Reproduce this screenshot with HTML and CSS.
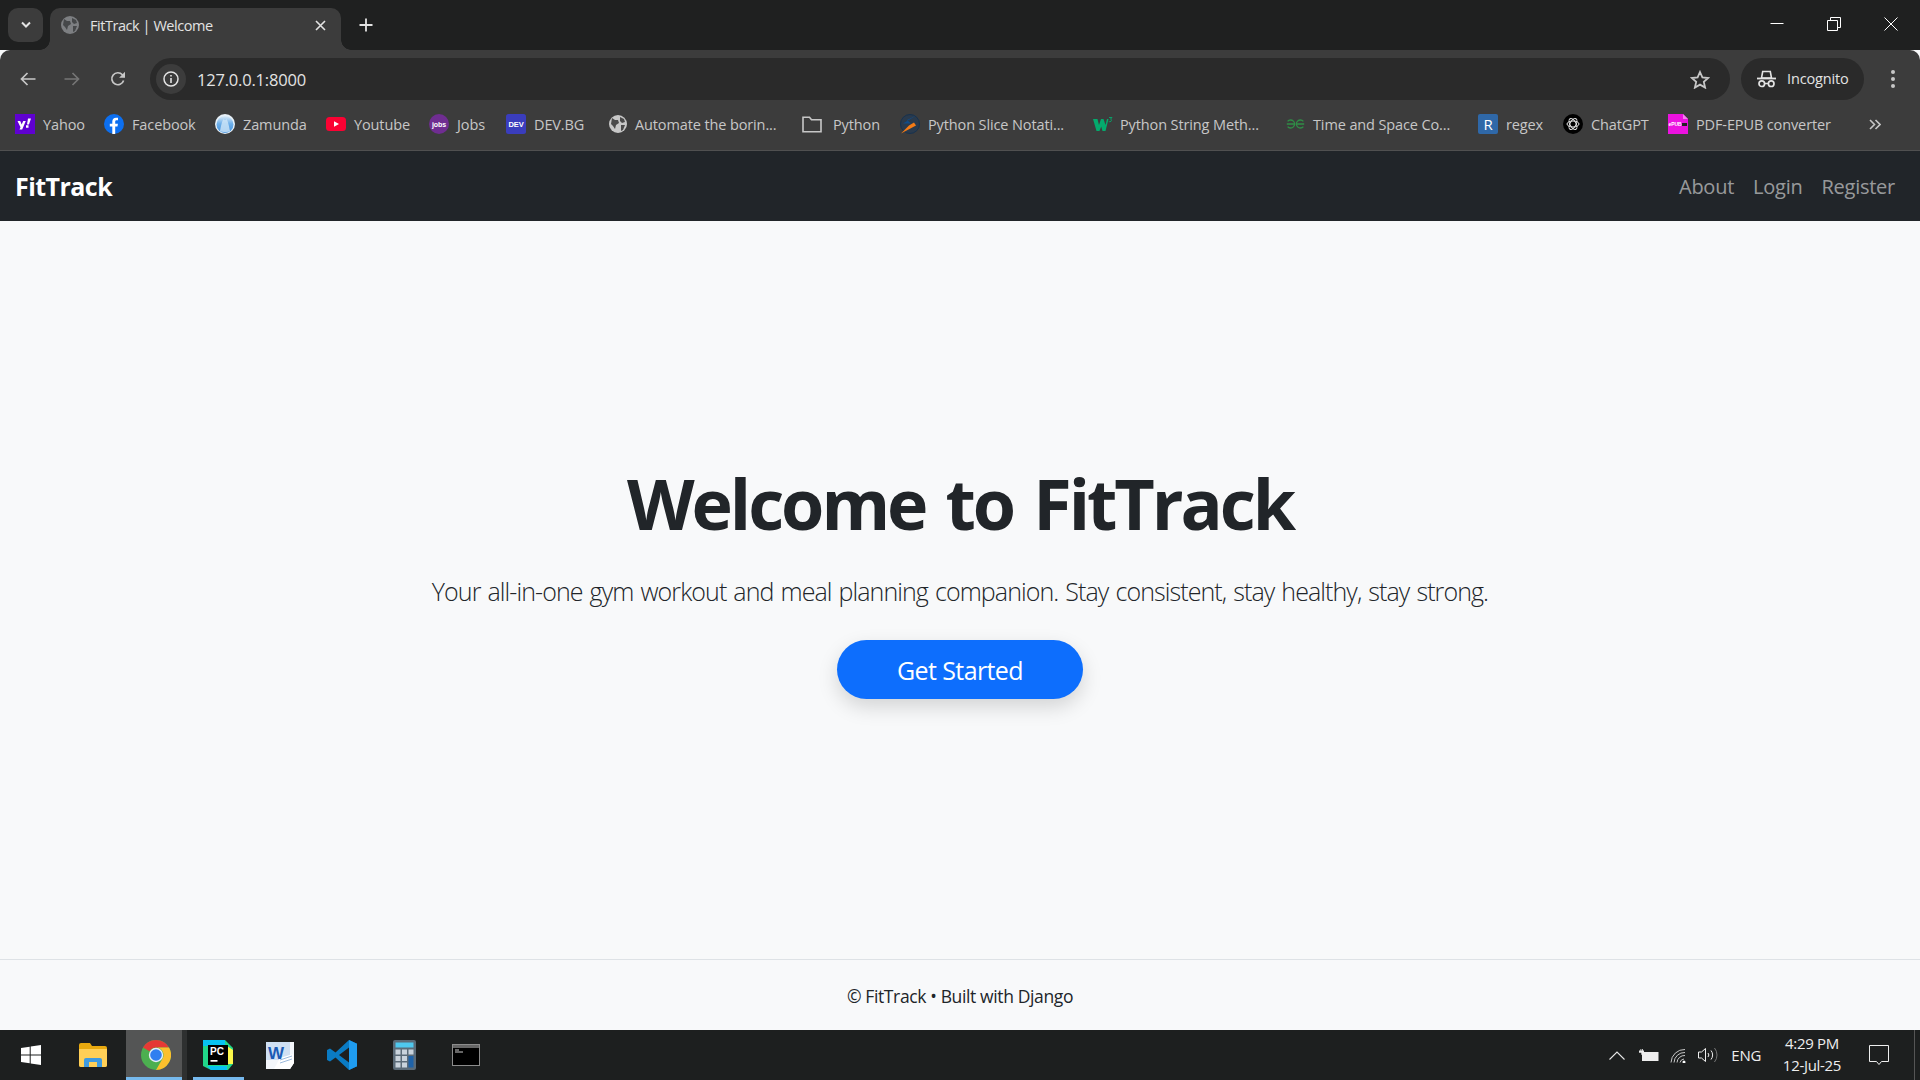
FILE: index.html
```html
<!DOCTYPE html>
<html lang="en">
<head>
<meta charset="utf-8">
<title>FitTrack | Welcome</title>
<link rel="stylesheet" href="styles.css">
</head>
<body>
<header class="browser">
  <div class="tabstrip">
    <button class="tablist"><svg width="12" height="8" viewBox="0 0 12 8"><path d="M2 1.500l4 4 4-4" fill="none" stroke="#e3e3e3" stroke-width="2"/></svg></button>
    <div class="tab">
      <svg class="fav" width="18" height="18" viewBox="0 0 18 18"><circle cx="9" cy="9" r="9" fill="#7d7f82"/><path d="M3 3l3 2 3 0 1 3-3 2-1 4-2-3-2-2zM11 2l4 2 1 3-3 1-2-2zM12 10l4 0-2 5-2 1z" fill="#46484a"/></svg>
      <span class="tabtitle">FitTrack | Welcome</span>
      <svg class="tabclose" width="11" height="11" viewBox="0 0 11 11"><path d="M1 1l9 9M10 1l-9 9" stroke="#e3e3e3" stroke-width="1.600"/></svg>
    </div>
    <svg class="newtab" width="14" height="14" viewBox="0 0 14 14"><path d="M7 0.500v13M0.500 7h13" stroke="#e3e3e3" stroke-width="1.800"/></svg>
    <div class="winctl">
      <svg width="14" height="14" viewBox="0 0 14 14"><path d="M0.500 6.500h13" stroke="#fff" stroke-width="1"/></svg>
      <svg width="14" height="14" viewBox="0 0 14 14"><path d="M0.500 3.500h10v10h-10zM3.500 3.500v-3h10v10h-3" fill="none" stroke="#fff" stroke-width="1"/></svg>
      <svg width="14" height="14" viewBox="0 0 14 14"><path d="M0.500 0.500l13 13M13.500 0.500l-13 13" stroke="#fff" stroke-width="1"/></svg>
    </div>
  </div>
  <div class="toolbar">
    <svg class="navicon" width="16" height="14" viewBox="0 0 16 14"><path d="M15.500 7H1.500M7.500 1L1.500 7l6 6" fill="none" stroke="#c7c7c7" stroke-width="1.700"/></svg>
    <svg class="navicon fwd" width="16" height="14" viewBox="0 0 16 14"><path d="M0.500 7h14M8.500 1l6 6-6 6" fill="none" stroke="#757575" stroke-width="1.700"/></svg>
    <svg class="navicon rel" width="16" height="16" viewBox="0 0 16 16"><path d="M13.600 9.500A6 6 0 1 1 12.400 3.800L14.500 6" fill="none" stroke="#c7c7c7" stroke-width="1.700"/><path d="M15 0.800v5.900H9.100z" fill="#c7c7c7"/></svg>
    <div class="omnibox">
      <span class="infochip"><svg width="16" height="16" viewBox="0 0 16 16"><circle cx="8" cy="8" r="7" fill="none" stroke="#e3e3e3" stroke-width="1.500"/><path d="M8 7v5M8 4v1.600" stroke="#e3e3e3" stroke-width="1.600"/></svg></span>
      <span class="url">127.0.0.1:8000</span>
      <svg class="star" width="20" height="19" viewBox="0 0 20 19"><path d="M10 2l2.400 5.400 5.800.6-4.400 3.900 1.300 5.700-5.100-3-5.100 3 1.300-5.700L1.800 8l5.800-.6z" fill="none" stroke="#c7c7c7" stroke-width="1.800"/></svg>
    </div>
    <div class="incognito">
      <svg width="19" height="18" viewBox="0 0 19 18"><path d="M4.500 8l1.200-6.500h7.600L14.500 8z" fill="none" stroke="#e3e3e3" stroke-width="1.600"/><path d="M0 8.500h19" stroke="#e3e3e3" stroke-width="1.800"/><circle cx="4.800" cy="13.700" r="2.800" fill="none" stroke="#e3e3e3" stroke-width="1.700"/><circle cx="14.200" cy="13.700" r="2.800" fill="none" stroke="#e3e3e3" stroke-width="1.700"/><path d="M7.500 13.500h4" stroke="#e3e3e3" stroke-width="1.500"/></svg>
      <span>Incognito</span>
    </div>
    <svg class="menu" width="4" height="18" viewBox="0 0 4 18"><circle cx="2" cy="2" r="2" fill="#c7c7c7"/><circle cx="2" cy="9" r="2" fill="#c7c7c7"/><circle cx="2" cy="16" r="2" fill="#c7c7c7"/></svg>
  </div>
  <nav class="bookmarks">
    <a class="bm"><svg width="20" height="20" viewBox="0 0 20 20"><rect width="20" height="20" fill="#5f01d1"/><path d="M2.500 7h2.700l1.500 3.600L8.200 7h2.600l-3.600 8.500H4.500l1-2.300zM11 11.300h2.500v2.500H11zM13 4.500h3l-2 6h-2z" fill="#fff"/></svg><span>Yahoo</span></a>
    <a class="bm"><svg width="20" height="20" viewBox="0 0 20 20"><circle cx="10" cy="10" r="10" fill="#0c6ff0"/><path d="M8.300 20v-7.400H5.800V9.700h2.500V7.500c0-2.500 1.500-3.800 3.700-3.800 1.100 0 2 .1 2 .1v2.400h-1.300c-1.200 0-1.500.7-1.500 1.500v2h2.700l-.4 2.900h-2.300V20z" fill="#fff"/></svg><span>Facebook</span></a>
    <a class="bm"><svg width="20" height="20" viewBox="0 0 20 20"><defs><linearGradient id="zam" x1="0" y1="0" x2="0" y2="1"><stop offset="0" stop-color="#dcecf8"/><stop offset=".45" stop-color="#6fb0ea"/><stop offset="1" stop-color="#3f8fdc"/></linearGradient></defs><circle cx="10" cy="10" r="10" fill="#e8f1f8"/><circle cx="10" cy="10.500" r="8.500" fill="url(#zam)"/><path d="M5 17c1-5 2-10 3.500-12 1 1.500 2 1.500 3 0C13 7 14 12 15 17c-1.500 1.500-8.500 1.500-10 0z" fill="#cfe6f8" opacity=".8"/></svg><span>Zamunda</span></a>
    <a class="bm"><svg width="20" height="14" viewBox="0 0 20 14"><rect width="20" height="14" rx="3.500" fill="#fb0233"/><path d="M8 4.200l5 2.800-5 2.800z" fill="#fff"/></svg><span>Youtube</span></a>
    <a class="bm"><svg width="20" height="20" viewBox="0 0 20 20"><circle cx="10" cy="10" r="10" fill="#6f2d91"/><text x="10" y="12.500" class="mini">jobs</text></svg><span>Jobs</span></a>
    <a class="bm"><svg width="20" height="20" viewBox="0 0 20 20"><rect width="20" height="20" rx="2.500" fill="#3a3dbd"/><text x="10" y="13" class="mini dev">DEV</text></svg><span>DEV.BG</span></a>
    <a class="bm"><svg width="18" height="18" viewBox="0 0 18 18"><circle cx="9" cy="9" r="9" fill="#c7c7c7"/><path d="M3 3l3 2 3 0 1 3-3 2-1 4-2-3-2-2zM11 2l4 2 1 3-3 1-2-2zM12 10l4 0-2 5-2 1z" fill="#4a4a4a"/></svg><span>Automate the borin...</span></a>
    <a class="bm folder"><svg width="20" height="17" viewBox="0 0 20 17"><path d="M1 15.700V1.300h6.500l2 2.500H19v11.900z" fill="none" stroke="#c7c7c7" stroke-width="1.600"/></svg><span>Python</span></a>
    <a class="bm"><svg width="20" height="20" viewBox="0 0 20 20"><circle cx="10" cy="10" r="9.500" fill="#2a3a4c" stroke="#17324f"/><path d="M17 1L7 6l4 3.500-8 0z" fill="#0f4c8a"/><path d="M1 19.500l8-8 5-3 2 3z" fill="#f47b16"/></svg><span>Python Slice Notati...</span></a>
    <a class="bm w3"><svg width="20" height="14" viewBox="0 0 20 14"><path d="M0 2h4.500l1.500 6 2-6h2.500l2 6 1.500-6h1.500L12.500 14h-3L8.200 9.500 6.500 14h-3z" fill="#04aa6d"/><path d="M16 .5h3l-1.500 1.600c1.200 0 1.400 2.600-.6 2.600-.5 0-.9-.1-1.100-.3" fill="none" stroke="#04aa6d" stroke-width=".9"/></svg><span>Python String Meth...</span></a>
    <a class="bm gfg"><svg width="19" height="10" viewBox="0 0 19 10"><path d="M1.600 2.400A4 4 0 1 1 1.600 7.600M0.800 5H8.800M17.400 2.400A4 4 0 1 0 17.400 7.600M10.200 5H18.200" fill="none" stroke="#2f8d46" stroke-width="1.300"/></svg><span>Time and Space Co...</span></a>
    <a class="bm"><span class="rbox">R</span><span>regex</span></a>
    <a class="bm"><svg width="20" height="20" viewBox="0 0 20 20"><circle cx="10" cy="10" r="10"/><g fill="none" stroke="#e6e6e6" stroke-width="1"><ellipse cx="10" cy="10" rx="6" ry="3"/><ellipse cx="10" cy="10" rx="6" ry="3" transform="rotate(60 10 10)"/><ellipse cx="10" cy="10" rx="6" ry="3" transform="rotate(120 10 10)"/></g></svg><span>ChatGPT</span></a>
    <a class="bm"><svg width="20" height="20" viewBox="0 0 20 20"><path d="M0 0h15l5 5v15H0z" fill="#ec12e0"/><path d="M15 0l5 5h-5z" fill="#f47fee"/><text x="7" y="12" class="mini epub">ePUB</text><rect x="14" y="9" width="5" height="3" fill="#222"/></svg><span>PDF-EPUB converter</span></a>
    <svg class="more" width="12" height="11" viewBox="0 0 12 11"><path d="M1 1l4.500 4.500L1 10M6.500 1L11 5.500 6.500 10" fill="none" stroke="#c7c7c7" stroke-width="1.600"/></svg>
  </nav>
</header>

<div class="sitenav">
  <a class="brand">FitTrack</a>
  <div class="links"><a>About</a><a>Login</a><a>Register</a></div>
</div>

<main class="hero">
  <h1>Welcome to FitTrack</h1>
  <p class="lead">Your all-in-one gym workout and meal planning companion. Stay consistent, stay healthy, stay strong.</p>
  <a class="cta">Get Started</a>
</main>

<footer class="foot">© FitTrack • Built with Django</footer>

<div class="taskbar">
  <div class="slot start"><svg width="20" height="20" viewBox="0 0 20 20"><path d="M0 2.900l8.700-1.200v7.700H0zM9.700 1.500L20 0v9.400H9.700zM0 10.400h8.700v7.900L0 17.100zM9.700 10.400H20V20L9.700 18.500z" fill="#fff"/></svg></div>
  <div class="slot"><svg width="28" height="24" viewBox="0 0 28 24"><path d="M0 2a2 2 0 0 1 2-2h9l2 3h13a2 2 0 0 1 2 2v17a2 2 0 0 1-2 2H2a2 2 0 0 1-2-2z" fill="#e9a90f"/><path d="M0 6h28v16a2 2 0 0 1-2 2H2a2 2 0 0 1-2-2z" fill="#ffcf57"/><path d="M5 24v-7a2 2 0 0 1 2-2h14a2 2 0 0 1 2 2v7h-5v-5h-8v5z" fill="#3f9ae0"/></svg></div>
  <div class="slot active"><svg width="30" height="30" viewBox="0 0 30 30"><circle cx="15" cy="15" r="15" fill="#4caf50"/><path d="M15 0a15 15 0 0 1 13 7.500H15a7.500 7.500 0 0 0-6.500 3.750L2 7.500A15 15 0 0 1 15 0z" fill="#e53935"/><path d="M28 7.500A15 15 0 0 1 15 30l6.500-11.250A7.500 7.500 0 0 0 15 7.500z" fill="#fbc02d"/><circle cx="15" cy="15" r="7.200" fill="#e8eef8"/><circle cx="15" cy="15" r="5.800" fill="#2f7ff0"/></svg></div>
  <div class="slot under"><svg width="30" height="30" viewBox="0 0 30 30"><path d="M0 0h22l8 8v16l-5 6H8l-8-4z" fill="#21d789"/><path d="M0 0h22v6H0z" fill="#07c3f2"/><path d="M24 6l6 4v14h-6z" fill="#fcf84a"/><path d="M4 26h20v4H8z" fill="#07c3f2"/><rect x="5" y="5" width="20" height="20" fill="#000"/><text x="7" y="15" class="pc">PC</text><rect x="7.500" y="20" width="7" height="1.700" fill="#fff"/></svg></div>
  <div class="slot"><svg width="28" height="27" viewBox="0 0 28 27"><path d="M0 0h28v21l-4 6H0z" fill="#f4f7fb"/><path d="M0 0h24v18H0z" fill="#cfe0f3"/><path d="M14 16l13-4 1 9-4 6H8z" fill="#fff"/><path d="M14 18l12-4M14 21l12-4" stroke="#9bb9dc" stroke-width="1"/><text x="2" y="17" class="wd">W</text></svg></div>
  <div class="slot"><svg width="30" height="30" viewBox="0 0 30 30"><path d="M22 0l8 3.800v22.400L22 30 8.500 17.500 3 21.500 0 20V10l3-1.500 5.500 4z" fill="#0a7bc4"/><path d="M22 0l8 3.800v22.400L22 30z" fill="#1f9cf0"/><path d="M22 7.500L12 15l10 7.500z" fill="#1e1f1f"/></svg></div>
  <div class="slot"><svg width="23" height="30" viewBox="0 0 23 30"><rect width="23" height="30" rx="2" fill="#5b6b78"/><rect x="2.500" y="2.500" width="18" height="5" fill="#4fc8ee"/><g fill="#c9d3dc"><rect x="2.500" y="9.500" width="5" height="5"/><rect x="9" y="9.500" width="5" height="5"/><rect x="15.500" y="9.500" width="5" height="5"/><rect x="2.500" y="16" width="5" height="5"/><rect x="9" y="16" width="5" height="5"/><rect x="2.500" y="22.500" width="5" height="5"/><rect x="9" y="22.500" width="5" height="5"/></g><rect x="15.500" y="16" width="5" height="11.500" fill="#1e62a8"/></svg></div>
  <div class="slot"><svg width="28" height="22" viewBox="0 0 28 22"><rect width="28" height="22" fill="#8c8c8c"/><rect x="1" y="1" width="26" height="3" fill="#666"/><rect x="1" y="4" width="26" height="17" fill="#000"/><path d="M3 6h4M3 8h8" stroke="#ccc" stroke-width="1"/></svg></div>
  <div class="tray">
    <svg class="t-chev" width="16" height="9" viewBox="0 0 16 9"><path d="M0.500 8.500L8 1l7.500 7.500" fill="none" stroke="#e8e8e8" stroke-width="1.100"/></svg>
    <svg class="t-bat" width="20" height="12" viewBox="0 0 20 12"><path d="M0 1.500h1.500V0h.8v1.500h.8V0h.8v1.500H5v2.200H3.500v2H2.300v-2H0z" fill="#eee"/><rect x="3.500" y="3.500" width="15.500" height="8" fill="#eee" stroke="#eee"/></svg>
    <svg class="t-wifi" width="16" height="15" viewBox="0 0 16 15"><path d="M1 14.500A13.500 13.500 0 0 1 15 1.500M4 14.500A10.500 10.500 0 0 1 15 4.500M7 14.500A7.500 7.500 0 0 1 15 7.500M10 14.500A4.500 4.500 0 0 1 14 11" fill="none" stroke="#c8c8c8" stroke-width="1"/><circle cx="14" cy="14" r="1.500" fill="#fff"/></svg>
    <svg class="t-vol" width="20" height="16" viewBox="0 0 20 16"><path d="M0.500 5h3L7.500 1.500v13L3.500 11h-3z" fill="none" stroke="#eee" stroke-width="1"/><path d="M10 6a3 3 0 0 1 0 4M13 3.500a7 7 0 0 1 0 9" fill="none" stroke="#eee" stroke-width="1"/><path d="M16.500 1a11 11 0 0 1 0 14" fill="none" stroke="#777" stroke-width="1"/></svg>
    <span class="lang">ENG</span>
    <div class="clock"><span>4:29 PM</span><span>12-Jul-25</span></div>
    <svg class="t-note" width="20" height="20" viewBox="0 0 20 20"><path d="M0.500 0.500h19v16h-7l-2.500 3-2.500-3h-7z" fill="none" stroke="#eee" stroke-width="1"/></svg>
    <i class="showdesk"></i>
  </div>
</div>
</body>
</html>
```
FILE: styles.css
```css
* { box-sizing: border-box; }
html, body { margin: 0; height: 100%; }
body {
  display: flex;
  flex-direction: column;
  height: 1080px;
  overflow: hidden;
  background: #f8f9fa;
  font-family: "Open Sans", "Noto Sans", sans-serif;
  color: #212529;
}
svg { display: block; flex: none; }
.mini { font: 700 7px "Liberation Sans", sans-serif; fill: #fff; text-anchor: middle; }
.mini.dev { font-size: 7.500px; }
.mini.epub { font-size: 5px; }
.pc { font: 700 10px "Liberation Sans", sans-serif; fill: #fff; }
.wd { font: 700 17px "Liberation Sans", sans-serif; fill: #1b5bb5; }

.browser { flex: none; }
.tabstrip {
  height: 50px;
  background: #1f2020;
  display: flex;
  align-items: flex-start;
  position: relative;
}
.tablist {
  width: 35px; height: 34px;
  margin: 8px 0 0 8px;
  padding: 0;
  border: 0;
  border-radius: 10px;
  background: #3c3c3c;
  display: flex; align-items: center; justify-content: center;
}
.tab {
  position: relative;
  width: 291px; height: 42px;
  margin: 8px 0 0 7px;
  padding: 0 15px 8px 11px;
  border-radius: 10px 10px 0 0;
  background: #3c3c3c;
  display: flex; align-items: center;
  color: #e3e3e3;
  font-size: 14.500px;
  letter-spacing: -0.450px;
}
.tab::before, .tab::after {
  content: "";
  position: absolute;
  bottom: 0;
  width: 10px; height: 10px;
  background: radial-gradient(circle at 0 0, #1f2020 9.500px, #3c3c3c 10px);
}
.tab::before { left: -10px; }
.tab::after { right: -10px; transform: scaleX(-1); }
.tabtitle { margin-left: 11px; flex: 1; }
.newtab { margin: 18px 0 0 18px; }
.winctl {
  margin: 17px 22px 0 auto;
  display: flex; gap: 43px;
}

.toolbar {
  height: 50px;
  background: #3c3c3c;
  border-radius: 10px 10px 0 0;
  display: flex; align-items: center;
  padding: 8px 0 0 20px;
}
.navicon.fwd { margin-left: 28px; }
.navicon.rel { margin-left: 30px; }
.omnibox {
  width: 1580px; height: 42px;
  margin-left: 24px;
  border-radius: 21px;
  background: #2a2a2a;
  display: flex; align-items: center;
  padding: 0 20px 0 6px;
}
.infochip {
  width: 30px; height: 30px; border-radius: 50%;
  background: #3c3c3c;
  display: flex; align-items: center; justify-content: center;
}
.url { margin-left: 11px; color: #e3e3e3; font-size: 16.500px; letter-spacing: -0.200px; flex: 1; }
.incognito {
  width: 123px; height: 42px;
  margin: -1px 0 0 11px;
  border-radius: 21px;
  background: #2a2a2a;
  display: flex; align-items: center; gap: 11px;
  padding-left: 16px;
  color: #e3e3e3;
  font-size: 14.500px;
  letter-spacing: -0.150px;
}
.menu { margin: -1px 0 0 27px; }

.bookmarks {
  height: 51px;
  background: #3c3c3c;
  border-bottom: 1px solid #505050;
  display: grid;
  grid-template-columns: 89px 111px 111px 103px 77px 103px 193px 98px 193px 193px 192px 85px 105px 201px auto;
  align-items: center;
  padding: 0 0 2px 15px;
  color: #c7c7c7;
  font-size: 14.500px;
  letter-spacing: -0.120px;
  white-space: nowrap;
}
.bm { display: flex; align-items: center; gap: 8px; }
.bm.folder { gap: 11px; }
.bm.w3 { gap: 7px; }
.rbox {
  width: 20px; height: 20px;
  background: #2f68a8; color: #fff;
  border-radius: 2px;
  display: flex; align-items: center; justify-content: center;
  font-size: 15px;
}

.sitenav {
  flex: none;
  height: 70px;
  background: #212529;
  display: flex; align-items: center; justify-content: space-between;
  padding: 0 25px 0 15px;
}
.brand { color: #fff; font-size: 25px; font-weight: 700; letter-spacing: -0.550px; }
.links { display: flex; gap: 19px; color: rgba(255,255,255,.55); font-size: 20px; letter-spacing: -0.250px; }

.hero {
  flex: 1;
  display: flex; flex-direction: column; align-items: center; justify-content: center;
  padding-bottom: 20px;
}
h1 {
  margin: 0;
  font-size: 70px;
  line-height: 84px;
  font-weight: 700;
  letter-spacing: -3.050px;
  word-spacing: 5px;
  color: #212529;
}
.lead {
  margin: 28px 0 0;
  font-size: 25px;
  line-height: 37px;
  font-weight: 300;
  letter-spacing: -0.910px;
  word-spacing: 1.400px;
  color: #212529;
}
.cta {
  margin-top: 30px;
  width: 246px; height: 59px;
  border-radius: 30px;
  background: #0d6efd;
  color: #fff;
  font-size: 25px;
  letter-spacing: -0.600px;
  display: flex; align-items: center; justify-content: center;
  box-shadow: 0 8px 20px rgba(0,0,0,.15);
}

.foot {
  flex: none;
  height: 71px;
  border-top: 1px solid #dee2e6;
  display: flex; align-items: center; justify-content: center;
  font-size: 17.500px;
  letter-spacing: -0.370px;
  padding-top: 2px;
}

.taskbar {
  flex: none;
  height: 50px;
  background: #1d1f1f;
  display: flex;
  position: relative;
}
.slot {
  width: 62px; height: 50px;
  display: flex; align-items: center; justify-content: center;
  position: relative;
}
.slot.active {
  width: 61px;
  margin-left: 2px;
  padding-left: 4px;
  background: #545555;
  border-right: 5px solid #2e3030;
}
.slot.active::after, .slot.under::after {
  content: ""; position: absolute; left: 0; right: 0; bottom: 0; height: 3px; background: #76b9ed;
}
.slot.under::after { left: 6px; right: 5px; }
.tray {
  margin-left: auto;
  display: flex; align-items: center;
  color: #eee;
  font-size: 15px;
  letter-spacing: -0.300px;
}
.t-bat { margin-left: 14px; }
.t-wifi { margin-left: 11px; }
.t-vol { margin-left: 12px; }
.lang { margin-left: 13px; }
.clock {
  width: 60px; margin-left: 21px;
  display: flex; flex-direction: column; align-items: center; gap: 3px;
  line-height: 19px;
  white-space: nowrap;
  margin-top: -2px;
}
.t-note { margin: 0 31px 0 27px; }
.showdesk { position: absolute; right: 5px; top: 0; bottom: 0; width: 1px; background: #555; }
```
